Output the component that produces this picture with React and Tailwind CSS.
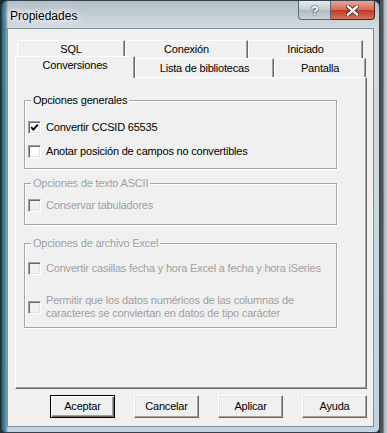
import React from "react";

function Check({ checked, disabled }) {
  return (
    <span
      className={`flex h-[13px] w-[13px] shrink-0 items-center justify-center border border-t-[#a0a0a0] border-l-[#a0a0a0] border-b-white border-r-white shadow-[inset_1px_1px_0_#696969,inset_-1px_-1px_0_#e3e3e3] ${
        disabled ? "bg-[#f0f0f0]" : "bg-white"
      }`}
    >
      {checked && (
        <svg width="9" height="9" viewBox="0 0 9 9">
          <polyline
            points="1.2,4.2 3.4,6.6 7.8,1.6"
            fill="none"
            stroke="#000"
            strokeWidth="1.9"
          />
        </svg>
      )}
    </span>
  );
}

function Row({ checked, disabled, children }) {
  return (
    <label className="flex items-center gap-[5px]">
      <Check checked={checked} disabled={disabled} />
      <span className={disabled ? "text-[#a0a0a0]" : "text-black"}>{children}</span>
    </label>
  );
}

function Tab({ className, children }) {
  return (
    <div
      className={`flex items-center justify-center rounded-tl-[2px] border-t border-l border-r border-t-white border-l-white border-r-[#696969] bg-[#f0f0f0] shadow-[inset_-1px_0_0_#a0a0a0] ${className}`}
    >
      {children}
    </div>
  );
}

function Btn({ def, children }) {
  return (
    <button
      className={`flex h-[23px] w-[65px] items-center justify-center bg-[#f0f0f0] text-black ${
        def
          ? "border border-black shadow-[inset_1px_1px_0_#fff,inset_-1px_-1px_0_#696969,inset_-2px_-2px_0_#a0a0a0]"
          : "border border-t-white border-l-white border-r-[#696969] border-b-[#696969] shadow-[inset_-1px_-1px_0_#a0a0a0,inset_1px_1px_0_#e3e3e3]"
      }`}
    >
      {children}
    </button>
  );
}

export default function App() {
  return (
    <div className="flex h-[433px] w-[387px] overflow-hidden bg-[#1c2d34] font-['Liberation_Sans',Arial,sans-serif] text-[11px] leading-[13px] tracking-[-0.2px]">
      <div className="ml-[1px] flex h-[433px] w-[379px] shrink-0 flex-col rounded-t-[7px] rounded-b-[5px] border border-[#34434d] bg-[linear-gradient(to_right,#2c6478_0px,#5f93a6_4px,transparent_6px),linear-gradient(to_bottom,#b3bec6_0px,#d3dbe0_27px,#c2d3df_100%)]">
        {/* title bar */}
        <div className="flex h-[27px] items-start justify-between">
          <span className="pl-[8px] pt-[8px] text-[12px] leading-[14px] tracking-normal text-black [text-shadow:0_0_8px_#fff,0_0_8px_#fff,0_0_4px_#fff]">
            Propiedades
          </span>
          <div className="mr-[4px] flex">
            <div className="flex h-[19px] w-[33px] items-center justify-center rounded-bl-[4px] border border-t-0 border-[#5d6a74] bg-[linear-gradient(to_bottom,#e4e9ed,#c3ccd3_50%,#aeb9c2_51%,#c9d3da)] text-[13px] font-bold text-white [text-shadow:0_0_1px_#333,0_0_2px_#333]">
              ?
            </div>
            <div className="flex h-[19px] w-[44px] items-center justify-center rounded-br-[4px] border border-t-0 border-l-0 border-[#5a2018] bg-[linear-gradient(to_bottom,#e7a79a,#d46a55_50%,#c03a24_51%,#d6735c)]">
              <svg width="13" height="11" viewBox="0 0 13 11">
                <path
                  d="M2 1.5 L11 9.5 M11 1.5 L2 9.5"
                  stroke="#4a1a12"
                  strokeWidth="4"
                  strokeLinecap="square"
                />
                <path
                  d="M2 1.5 L11 9.5 M11 1.5 L2 9.5"
                  stroke="#fff"
                  strokeWidth="2.4"
                  strokeLinecap="square"
                />
              </svg>
            </div>
          </div>
        </div>

        {/* client */}
        <div className="mx-[5px] mb-[5px] flex flex-1 flex-col border border-[#7d8d99] bg-[#f0f0f0] pl-[7px] pt-[11px]">
          <div className="ml-[2px] flex h-[18px]">
            <Tab className="w-[108px]">SQL</Tab>
            <Tab className="w-[123px]">Conexión</Tab>
            <Tab className="w-[115px]">Iniciado</Tab>
          </div>
          <div className="relative z-10 flex h-[19px] items-end">
            <Tab className="-mb-[1px] h-[22px] w-[120px] pb-[4px]">Conversiones</Tab>
            <Tab className="h-[19px] w-[139px]">Lista de bibliotecas</Tab>
            <Tab className="h-[19px] w-[92px]">Pantalla</Tab>
          </div>

          <div className="flex h-[312px] w-[352px] flex-col border border-t-white border-l-white border-r-[#696969] border-b-[#696969] pt-[16px] shadow-[inset_-1px_-1px_0_#a0a0a0]">
            <fieldset className="ml-[8px] w-[313px] border border-[#a5a5a5] px-[3px] pt-[14px] pb-[10px] shadow-[inset_1px_1px_0_#fff,1px_1px_0_#fff]">
              <legend className="ml-[3px] px-[2px] text-black">Opciones generales</legend>
              <div className="flex flex-col gap-[11px]">
                <Row checked>Convertir CCSID 65535</Row>
                <Row>Anotar posición de campos no convertibles</Row>
              </div>
            </fieldset>

            <fieldset className="mt-[8px] ml-[8px] w-[313px] border border-[#a5a5a5] px-[3px] pt-[9px] pb-[12px] shadow-[inset_1px_1px_0_#fff,1px_1px_0_#fff]">
              <legend className="ml-[3px] px-[2px] text-[#a0a0a0]">Opciones de texto ASCII</legend>
              <Row disabled>Conservar tabuladores</Row>
            </fieldset>

            <fieldset className="mt-[12px] ml-[8px] w-[313px] border border-[#a5a5a5] px-[3px] pt-[12px] pb-[7px] shadow-[inset_1px_1px_0_#fff,1px_1px_0_#fff]">
              <legend className="ml-[3px] px-[2px] text-[#a0a0a0]">Opciones de archivo Excel</legend>
              <div className="flex flex-col gap-[19px]">
                <Row disabled>Convertir casillas fecha y hora Excel a fecha y hora iSeries</Row>
                <Row disabled>
                  Permitir que los datos numéricos de las columnas de
                  <br />
                  caracteres se conviertan en datos de tipo carácter
                </Row>
              </div>
            </fieldset>
          </div>

          <div className="mt-[6px] flex w-[352px] justify-end gap-[19px]">
            <Btn def>Aceptar</Btn>
            <Btn>Cancelar</Btn>
            <Btn>Aplicar</Btn>
            <Btn>Ayuda</Btn>
          </div>
        </div>
      </div>
      <div className="flex-1 bg-[linear-gradient(to_right,#4c5358_0px,#4c5358_3px,#a9b5be_4px,#c4ccd2_100%)]" />
    </div>
  );
}
